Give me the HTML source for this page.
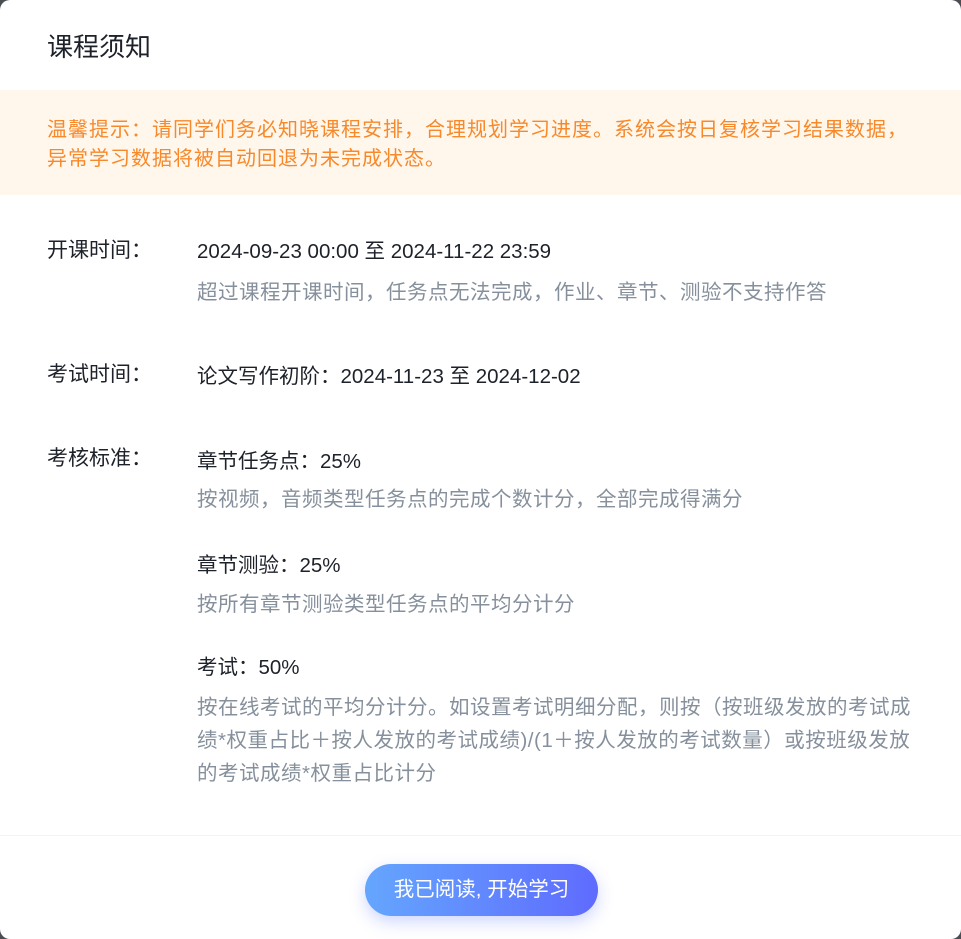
<!DOCTYPE html><html><head><meta charset="utf-8"><style>
body{margin:0;width:961px;height:939px;background:#4a4d52;font-family:"Liberation Sans","Noto Sans CJK SC",sans-serif;overflow:hidden}
.m{position:absolute;left:0;top:0;width:961px;height:939px;background:#fff;border-radius:10px}
.t{position:absolute;left:47px;top:29px;font-size:26px;color:#1d2129;line-height:36px}
.tip{position:absolute;left:0;top:90px;width:961px;height:105px;background:#fff6ec;color:#f7892a;font-size:20px;letter-spacing:1px;line-height:29px;box-sizing:border-box;padding:26px 0 0 47px}
.l{position:absolute;left:47px;font-size:21px;color:#1d2129;white-space:nowrap;line-height:30px}
.x{position:absolute;left:197px;width:725px;font-size:20.5px;line-height:33px;white-space:nowrap}
.w{white-space:normal}
.k{color:#1d2129}.g{color:#86909c;letter-spacing:0.5px}
.div{position:absolute;left:0;top:835px;width:961px;height:1px;background:#f2f3f5}
.btn{position:absolute;left:365px;top:864px;width:233px;height:52px;border-radius:26px;background:linear-gradient(90deg,#64a6fe,#5f6bfe);color:#fff;font-size:20.5px;line-height:52px;text-align:center;box-shadow:0 6px 16px rgba(95,120,254,.3)}
</style></head><body><div class="m">
<div class="t">课程须知</div>
<div class="tip">温馨提示：请同学们务必知晓课程安排，合理规划学习进度。系统会按日复核学习结果数据，<br>异常学习数据将被自动回退为未完成状态。</div>
<div class="l" style="top:236px">开课时间：</div>
<div class="x k" style="top:235px">2024-09-23 00:00 至 2024-11-22 23:59</div>
<div class="x g" style="top:276px">超过课程开课时间，任务点无法完成，作业、章节、测验不支持作答</div>
<div class="l" style="top:360px">考试时间：</div>
<div class="x k" style="top:360px">论文写作初阶：2024-11-23 至 2024-12-02</div>
<div class="l" style="top:444px">考核标准：</div>
<div class="x k" style="top:445px">章节任务点：25%</div>
<div class="x g" style="top:483px">按视频，音频类型任务点的完成个数计分，全部完成得满分</div>
<div class="x k" style="top:549px">章节测验：25%</div>
<div class="x g" style="top:588px">按所有章节测验类型任务点的平均分计分</div>
<div class="x k" style="top:651px">考试：50%</div>
<div class="x g w" style="top:691px">按在线考试的平均分计分。如设置考试明细分配，则按（按班级发放的考试成绩*权重占比＋按人发放的考试成绩)/(1＋按人发放的考试数量）或按班级发放的考试成绩*权重占比计分</div>
<div class="div"></div>
<div class="btn">我已阅读, 开始学习</div>
</div></body></html>
